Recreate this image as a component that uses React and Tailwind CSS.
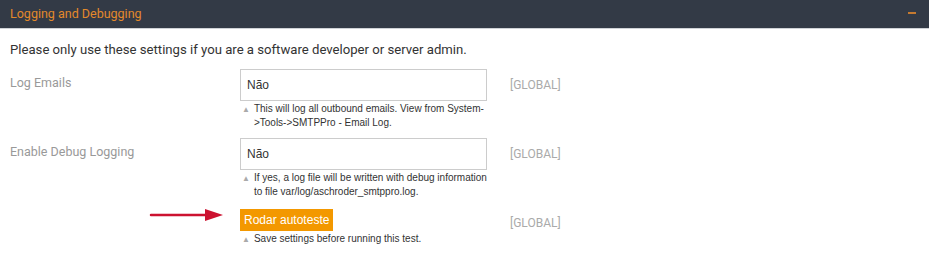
const rows = [
  {
    label: "Log Emails",
    value: "Não",
    note: "This will log all outbound emails. View from System-\u200B>Tools->SMTPPro - Email Log.",
  },
  {
    label: "Enable Debug Logging",
    value: "Não",
    note: "If yes, a log file will be written with debug information to file var/log/aschroder_smtppro.log.",
  },
];

const Note = ({ children }) => (
  <p className="flex gap-[4px] pl-[2px] pt-[1px] text-[10px] leading-[14px] text-[#333] font-['Liberation_Sans',Arial,sans-serif]">
    <span className="text-[8px] text-[#aaa] leading-[15px] shrink-0">▲</span>
    <span>{children}</span>
  </p>
);

const App = () => {
  return (
    <div className="w-[929px] h-[253px] bg-white font-['Roboto',sans-serif]">
      <div className="h-[29px] bg-[#333a46] border-b border-[#cfd2d6] flex items-center justify-between px-[10px]">
        <h3 className="text-[12.5px] text-[#e3892b] leading-none">Logging and Debugging</h3>
        <span className="w-[8px] h-[2px] bg-[#c57a30] mr-[3px] mt-[-3px]"></span>
      </div>

      <div className="px-[10px] pt-[12px]">
        <p className="text-[13.15px] leading-[18px] text-[#333]">
          Please only use these settings if you are a software developer or server admin.
        </p>

        <div className="mt-[10px] flex flex-col gap-[8px]">
          {rows.map((row) => (
            <div key={row.label} className="flex">
              <label className="w-[230px] pt-[6px] text-[12.5px] leading-[16px] text-[#999]">
                {row.label}
              </label>
              <div className="w-[247px]">
                <div className="h-[32px] border border-[#ccc] flex items-center px-[6px] text-[12px] text-[#333] font-['Liberation_Sans',Arial,sans-serif]">
                  {row.value}
                </div>
                <Note>{row.note}</Note>
              </div>
              <span className="ml-[23px] pt-[8px] text-[12px] leading-[16px] text-[#aaa]">[GLOBAL]</span>
            </div>
          ))}

          <div className="flex">
            <div className="w-[230px] flex justify-end items-start pt-[1px] pr-[15px]">
              <svg width="76" height="14" viewBox="0 0 76 14">
                <line x1="2" y1="7" x2="58" y2="7" stroke="#cc1230" strokeWidth="2.5" strokeLinecap="round" />
                <polygon points="56,1 74,7 56,13" fill="#cc1230" />
              </svg>
            </div>
            <div className="w-[247px]">
              <button className="h-[22px] px-[4px] bg-[#f39800] text-white text-[12px] leading-[22px] font-['Liberation_Sans',Arial,sans-serif]">
                Rodar autoteste
              </button>
              <Note>Save settings before running this test.</Note>
            </div>
            <span className="ml-[23px] pt-[8px] text-[12px] leading-[16px] text-[#aaa]">[GLOBAL]</span>
          </div>
        </div>
      </div>
    </div>
  );
};

export default App;
